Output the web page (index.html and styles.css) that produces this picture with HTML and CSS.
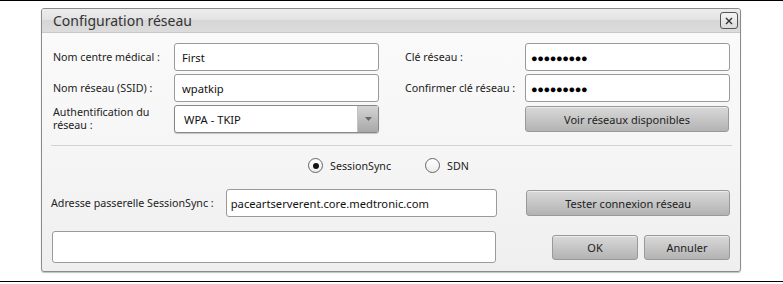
FILE: index.html
```html
<!DOCTYPE html>
<html lang="fr">
<head>
    <meta charset="UTF-8">
    <title>Configuration réseau</title>
    <link rel="stylesheet" href="styles.css">
</head>
<body>
<div class="page">
    <div class="dialog">
        <div class="title-bar">
            <span class="title">Configuration réseau</span>
            <span class="close-btn">
                <svg width="10" height="10" viewBox="0 0 10 10"><path d="M2 2 L8 8 M8 2 L2 8" stroke="#333" stroke-width="1.4" fill="none"/></svg>
            </span>
        </div>
        <div class="dialog-body">
            <div class="fields">
                <label class="lbl">Nom centre médical :</label>
                <div class="input">First</div>
                <span></span>
                <label class="lbl">Clé réseau :</label>
                <div class="input dots">●●●●●●●●●</div>

                <label class="lbl">Nom réseau (SSID) :</label>
                <div class="input">wpatkip</div>
                <span></span>
                <label class="lbl">Confirmer clé réseau :</label>
                <div class="input dots">●●●●●●●●●</div>

                <label class="lbl">Authentification du réseau :</label>
                <div class="input select">
                    <span class="select-value">WPA - TKIP</span>
                    <span class="select-arrow">
                        <svg width="7" height="4" viewBox="0 0 7 4"><path d="M0 0 L7 0 L3.5 4 Z" fill="#666"/></svg>
                    </span>
                </div>
                <span></span>
                <span></span>
                <div class="btn btn-wide">Voir réseaux disponibles</div>
            </div>

            <div class="separator"></div>

            <div class="radio-row">
                <span class="radio-item"><span class="radio checked"></span>SessionSync</span>
                <span class="radio-item"><span class="radio"></span>SDN</span>
            </div>

            <div class="address-row">
                <label class="lbl">Adresse passerelle SessionSync :</label>
                <div class="input address">paceartserverent.core.medtronic.com</div>
                <div class="btn btn-wide">Tester connexion réseau</div>
            </div>

            <div class="bottom-row">
                <div class="input status"></div>
                <div class="actions">
                    <div class="btn btn-small">OK</div>
                    <div class="btn btn-small">Annuler</div>
                </div>
            </div>
        </div>
    </div>
</div>
</body>
</html>
```

FILE: styles.css
```css
body {
    margin: 0;
    padding: 0;
    background: #fff;
    font-family: "Noto Sans", "Open Sans", sans-serif;
    font-size: 10.7px;
    color: #222;
}
.page {
    border-top: 1px solid #000;
    border-bottom: 1px solid #000;
    height: 282px;
    padding-top: 7px;
    box-sizing: border-box;
    width: 783px;
}
.dialog {
    margin-left: 41px;
    width: 700px;
    height: 264px;
    box-sizing: border-box;
    border: 1px solid #8a8a8a;
    border-radius: 3px;
    background: linear-gradient(#fbfbfb, #f6f6f6 50%, #efefef);
    box-shadow: 0 1px 1px rgba(0,0,0,0.25);
    overflow: hidden;
}
.title-bar {
    height: 23px;
    display: flex;
    align-items: center;
    justify-content: space-between;
    padding: 0 2px 0 11px;
    background: linear-gradient(#ececec, #e4e4e4 45%, #d6d6d6 50%, #dcdcdc);
    border-bottom: 1px solid #c8c8c8;
}
.title {
    font-size: 14px;
    color: #333;
}
.close-btn {
    width: 16px;
    height: 15px;
    border: 1px solid #555;
    border-radius: 3px;
    background: linear-gradient(#f4f4f4, #dcdcdc);
    display: flex;
    align-items: center;
    justify-content: center;
}
.dialog-body {
    padding: 10px 10px 0 11px;
}
.fields {
    display: grid;
    grid-template-columns: 121px 205px 26px 120px 205px;
    grid-auto-rows: 28px;
    row-gap: 3px;
    align-items: center;
}
.lbl {
    line-height: 13px;
}
.input {
    height: 28px;
    box-sizing: border-box;
    background: #fff;
    border: 1px solid #9a9a9a;
    border-radius: 3px;
    padding: 0 7px;
    display: flex;
    align-items: center;
    font-size: 11.2px;
    color: #111;
}
.dots {
    font-size: 11px;
    letter-spacing: -0.4px;
    color: #000;
    padding-left: 5px;
}
.select {
    padding: 0 0 0 9px;
    border-color: #888;
    box-shadow: 0 1px 1px rgba(0,0,0,0.2);
}
.select-value {
    flex: 1;
}
.select-arrow {
    width: 20px;
    height: 100%;
    background: linear-gradient(#d4d4d4, #a8a8a8);
    border-left: 1px solid #c4c4c4;
    display: flex;
    align-items: center;
    justify-content: center;
}
.btn {
    box-sizing: border-box;
    height: 26px;
    border: 1px solid #999;
    border-radius: 3px;
    background: linear-gradient(#d9d9d9, #c6c6c6 50%, #b3b3b3);
    box-shadow: inset 0 1px 0 #ececec;
    display: flex;
    align-items: center;
    justify-content: center;
    color: #222;
    font-size: 11px;
}
.btn-wide {
    width: 204px;
}
.btn-small {
    width: 86px;
    height: 25px;
}
.separator {
    height: 1px;
    background: #d2d2d2;
    margin: 12px 0 0 -2px;
    width: 681px;
}
.radio-row {
    display: flex;
    justify-content: center;
    gap: 34px;
    margin: 12px 0 0 -6px;
    height: 15px;
    align-items: center;
}
.radio-item {
    display: flex;
    align-items: center;
    gap: 7px;
}
.radio {
    width: 13px;
    height: 13px;
    border: 1px solid #666;
    border-radius: 50%;
    background: linear-gradient(#fff, #ececec);
    display: flex;
    align-items: center;
    justify-content: center;
}
.radio.checked::after {
    content: "";
    width: 6px;
    height: 6px;
    border-radius: 50%;
    background: #111;
}
.address-row {
    display: flex;
    align-items: center;
    margin-top: 16px;
    margin-left: -2px;
}
.address-row .lbl {
    width: 175px;
}
.address {
    width: 272px;
    padding-left: 4px;
}
.address-row .btn {
    margin-left: 29px;
}
.bottom-row {
    display: flex;
    align-items: center;
    margin-top: 14px;
    margin-left: -1px;
}
.status {
    width: 444px;
    height: 32px;
}
.actions {
    display: flex;
    gap: 6px;
    margin-left: 56px;
}
```
